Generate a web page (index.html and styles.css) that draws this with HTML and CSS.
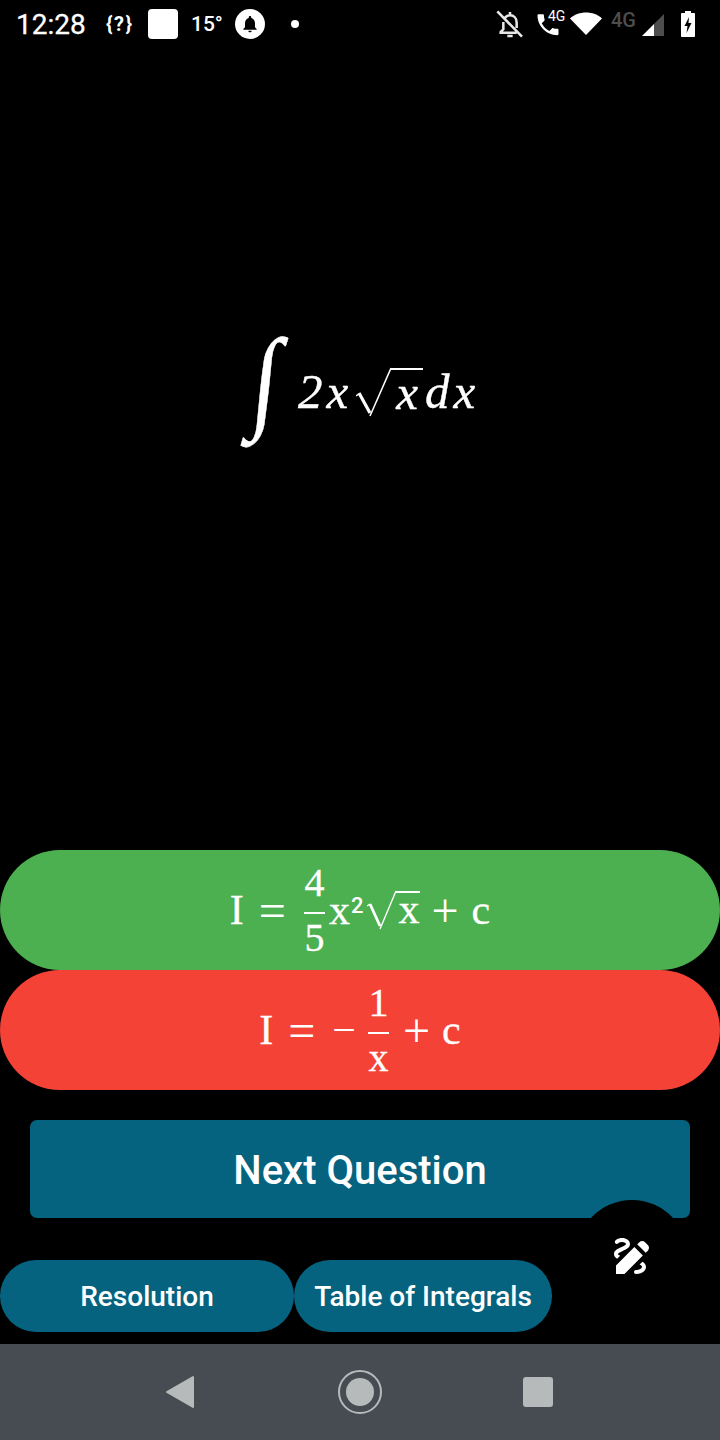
FILE: index.html
```html
<!DOCTYPE html>
<html lang="en">
<head>
    <meta charset="UTF-8">
    <meta name="viewport" content="width=device-width, initial-scale=1.0">
    <title>Integrals Quiz</title>
    <link rel="stylesheet" href="styles.css">
</head>
<body>
<div class="screen">

    <div class="status-bar">
        <span class="clock">12:28</span>
        <span class="unknown">{?}</span>
        <span class="white-square"></span>
        <span class="temp">15°</span>
        <span class="bell-badge">
            <svg width="20" height="20" viewBox="0 0 24 24"><path fill="#000" d="M12 22c1.100 0 2-.9 2-2h-4c0 1.100.9 2 2 2zm6-6v-5c0-3.100-1.600-5.600-4.500-6.300V4c0-.8-.7-1.500-1.500-1.500s-1.500.7-1.500 1.500v.7C7.600 5.400 6 7.900 6 11v5l-2 2v1h16v-1l-2-2z"/></svg>
        </span>
        <span class="dot"></span>

        <span class="status-right">
            <svg class="ic-bell-off" width="32" height="32" viewBox="0 0 24 24"><path fill="none" stroke="#e8e8e8" stroke-width="1.900" d="M7 10.500V16l-2 2v.5h12M8.300 7.200C9.100 6.200 10.400 5.500 12 5.500c2.900 0 5 2.300 5 5.500v4M10 21h4M12 5V3M2.500 2.500l18.500 19"/></svg>
            <span class="call">
                <svg width="28" height="28" viewBox="0 0 24 24"><path fill="#fff" d="M6.600 8.800c1.400 2.800 3.800 5.100 6.600 6.600l2.200-2.200c.3-.3.700-.4 1-.2 1.100.4 2.300.6 3.600.6.600 0 1 .4 1 1V18c0 .6-.4 1-1 1C10.600 19 3 11.400 3 2c0-.6.4-1 1-1h3.500c.6 0 1 .4 1 1 0 1.300.2 2.500.6 3.600.1.300 0 .7-.2 1L6.600 8.800z"/></svg>
                <span class="call-4g">4G</span>
            </span>
            <svg class="ic-wifi" width="32" height="24" viewBox="0 0 32 24"><path fill="#fff" d="M0 6.500C4 2.500 10 .5 16 .5s12 2 16 6L16 23z"/></svg>
            <span class="net-4g">4G</span>
            <svg class="ic-signal" width="22" height="22" viewBox="0 0 22 22"><path fill="#fff" d="M0 22 12 10v12z"/><path fill="#4d4d4d" d="M12 10 22 0v22H12z"/></svg>
            <svg class="ic-battery" width="14" height="26" viewBox="0 0 14 26"><path fill="#fff" d="M4 0h6v2h3c.6 0 1 .4 1 1v22c0 .6-.4 1-1 1H1c-.6 0-1-.4-1-1V3c0-.6.4-1 1-1h3z"/><path fill="#000" d="M8 6 3.500 15H6.500L5.500 22l5-10H7.500z"/></svg>
        </span>
    </div>

    <div class="question">
        <div class="math math-q">
            <span class="integral">∫</span>
            <span class="it two-x">2x</span>
            <span class="sqrt">
                <svg width="35" height="50" viewBox="0 0 35 50"><path fill="none" stroke="#fff" stroke-width="1.500" d="M0 29l3-2"/><path fill="none" stroke="#fff" stroke-width="3.200" d="M3 26l11 20"/><path fill="none" stroke="#fff" stroke-width="1.600" d="M14 49 35 1"/></svg>
                <span class="radicand it">x</span>
            </span>
            <span class="it dx">dx</span>
        </div>
    </div>

    <div class="answer green">
        <div class="math math-a">
            <span>I</span>
            <span class="eq">=</span>
            <span class="frac"><span class="num">4</span><span class="den">5</span></span>
            <span class="x-after">x</span><span class="sup">2</span>
            <span class="sqrt sqrt-small">
                <svg width="29" height="40" viewBox="0 0 29 40"><path fill="none" stroke="#fff" stroke-width="1.400" d="M0 16l3-2"/><path fill="none" stroke="#fff" stroke-width="2.800" d="M3 14l10 22"/><path fill="none" stroke="#fff" stroke-width="1.400" d="M13 39 29 1"/></svg>
                <span class="radicand">x</span>
            </span>
            <span class="op">+</span>
            <span class="c">c</span>
        </div>
    </div>

    <div class="answer red">
        <div class="math math-a">
            <span>I</span>
            <span class="eq">=</span>
            <span class="minus">−</span>
            <span class="frac"><span class="num">1</span><span class="den">x</span></span>
            <span class="op op-wide">+</span>
            <span class="c">c</span>
        </div>
    </div>

    <div class="next-wrap">
        <button class="next-btn" type="button">Next Question</button>
    </div>

    <div class="bottom-btns">
        <button class="pill pill-res" type="button">Resolution</button>
        <button class="pill pill-table" type="button">Table of Integrals</button>
    </div>

    <div class="fab">
        <svg width="48" height="48" viewBox="0 0 24 24"><path fill="#fff" d="M18.850 10.390l1.060-1.060c.78-.78.78-2.050 0-2.830L18.500 5.090c-.78-.78-2.050-.78-2.830 0l-1.060 1.060 4.240 4.240zm-5.660-2.830L4 16.760V21h4.240l9.190-9.190-4.240-4.250zM19 17.500c0 2.190-2.540 3.500-5 3.500-.55 0-1-.45-1-1s.45-1 1-1c1.540 0 3-.73 3-1.500 0-.47-.48-.87-1.230-1.200l1.480-1.480c1.070.63 1.750 1.470 1.750 2.680zM4.580 13.350C3.610 12.790 3 12.060 3 11c0-1.800 1.890-2.630 3.560-3.360C7.590 7.180 9 6.560 9 6c0-.41-.78-1-2-1-1.260 0-1.800.61-1.830.64-.35.41-.98.46-1.400.12-.41-.34-.49-.95-.15-1.380C3.730 4.240 4.760 3 7 3s4 1.320 4 3c0 1.870-1.930 2.720-3.640 3.470C6.420 9.880 5 10.500 5 11c0 .31.43.6 1.070.86l-1.490 1.490z"/></svg>
    </div>

    <div class="nav-bar">
        <svg width="30" height="34" viewBox="0 0 30 34"><path fill="#b6babb" stroke="#b6babb" stroke-width="2" stroke-linejoin="round" d="M2 17 28 2v30z"/></svg>
        <span class="nav-home"><span class="nav-home-in"></span></span>
        <span class="nav-square"></span>
    </div>

</div>
</body>
</html>
```

FILE: styles.css
```css
* {
    box-sizing: border-box;
}
body {
    margin: 0;
    background-color: #000;
    font-family: Roboto, sans-serif;
    color: #fff;
}
button {
    font-family: Roboto, sans-serif;
    font-weight: 500;
    color: #fff;
    border: none;
    padding: 0;
}
.screen {
    position: relative;
    width: 720px;
    height: 1440px;
    display: flex;
    flex-direction: column;
    overflow: hidden;
}

/* status bar */
.status-bar {
    height: 48px;
    display: flex;
    align-items: center;
    padding-left: 16px;
    flex-shrink: 0;
}
.clock {
    font-size: 28px;
    width: 90px;
    -webkit-text-stroke: 0.3px #fff;
}
.unknown {
    font-size: 20px;
    font-weight: 700;
    letter-spacing: 1.500px;
    width: 42px;
}
.white-square {
    width: 30px;
    height: 30px;
    background-color: #fff;
    border-radius: 4px;
    margin-right: 13px;
}
.temp {
    font-size: 21px;
    font-weight: 500;
    width: 44px;
}
.bell-badge {
    width: 30px;
    height: 30px;
    border-radius: 50%;
    background-color: #fff;
    display: flex;
    align-items: center;
    justify-content: center;
}
.dot {
    width: 8px;
    height: 8px;
    border-radius: 50%;
    background-color: #fff;
    margin-left: 26px;
}
.status-right {
    margin-left: auto;
    margin-right: 25px;
    display: flex;
    align-items: center;
}
.call {
    display: flex;
    align-items: flex-start;
    width: 40px;
    margin-left: 8px;
    padding-top: 5px;
}
.call-4g {
    font-size: 14px;
    margin-left: -14px;
    line-height: 16px;
    margin-top: -5px;
}
.ic-wifi {
    margin-left: -4px;
}
.net-4g {
    font-size: 20px;
    color: #4d4d4d;
    font-weight: 500;
    margin-left: 9px;
    margin-top: -8px;
    width: 30px;
}
.ic-signal {
    margin-left: 1px;
    margin-top: 1px;
}
.ic-battery {
    margin-left: 17px;
}

/* math */
.math {
    font-family: "Liberation Serif", serif;
    display: flex;
    align-items: center;
}
.it {
    font-style: italic;
}
.question {
    height: 802px;
    display: flex;
    justify-content: center;
    padding-top: 284px;
    flex-shrink: 0;
}
.math-q {
    font-size: 49px;
    height: 120px;
    -webkit-text-stroke: 0.4px #fff;
}
.two-x,
.dx {
    letter-spacing: 4px;
    margin-top: -2px;
}
.integral {
    font-size: 96px;
    width: 46px;
    text-align: center;
    margin-right: 11px;
    transform: translate(2px, -14px) skewX(-6deg) scaleY(1.175);
}
.sqrt {
    display: inline-flex;
    align-items: flex-start;
    margin-left: 4px;
}
.sqrt svg {
    display: block;
}
.radicand {
    border-top: 2px solid #fff;
    line-height: 45px;
    padding: 0 5px;
    margin-top: 1px;
}
.sqrt-small {
    margin-left: 4px;
}
.sqrt-small .radicand {
    line-height: 32px;
    padding: 0 1px 0 2px;
}
.dx {
    margin-left: 2px;
}

.answer {
    height: 120px;
    flex-shrink: 0;
    display: flex;
    justify-content: center;
    align-items: center;
    border-radius: 60px;
}
.green {
    background-color: #4caf50;
}
.red {
    background-color: #f44336;
}
.math-a {
    font-size: 42px;
    -webkit-text-stroke: 0.3px #fff;
}
.eq {
    font-size: 48px;
    margin: 0 18px 0 15px;
    -webkit-text-stroke: 0;
}
.op {
    font-size: 48px;
    margin: 0 13px 0 11px;
    -webkit-text-stroke: 0;
}
.op-wide {
    margin: 0 12px 0 14px;
}
.minus {
    margin-right: 12px;
    margin-left: -1px;
    -webkit-text-stroke: 0;
}
.x-after {
    margin-left: 4px;
}
.sup {
    font-family: Roboto, sans-serif;
    font-size: 22px;
    font-weight: 500;
    align-self: flex-start;
    margin-top: 33px;
    line-height: 24px;
    margin-left: 1px;
    -webkit-text-stroke: 0;
}
.frac {
    display: inline-flex;
    flex-direction: column;
    align-items: center;
    width: 21px;
    font-size: 40px;
}
.num {
    border-bottom: 2px solid #fff;
    width: 100%;
    text-align: center;
    line-height: 43px;
    padding-bottom: 8px;
}
.den {
    line-height: 44px;
    padding-top: 2px;
}

/* buttons */
.next-wrap {
    padding: 30px 30px 0;
    flex-shrink: 0;
}
.next-btn {
    width: 660px;
    height: 98px;
    display: block;
    background-color: #06637f;
    border-radius: 7px;
    font-size: 40px;
    padding-top: 2px;
}
.bottom-btns {
    display: flex;
    margin-top: 42px;
    flex-shrink: 0;
}
.pill {
    height: 72px;
    border-radius: 36px;
    background-color: #06637f;
    font-size: 28px;
}
.pill-res {
    width: 294px;
}
.pill-table {
    width: 258px;
}
.fab {
    position: absolute;
    left: 576px;
    top: 1200px;
    width: 112px;
    height: 112px;
    border-radius: 50%;
    background-color: #000;
    display: flex;
    align-items: center;
    justify-content: center;
}

/* nav */
.nav-bar {
    margin-top: 12px;
    height: 96px;
    flex-shrink: 0;
    background-color: #464c52;
    display: flex;
    align-items: center;
    padding-left: 165px;
}
.nav-home {
    width: 44px;
    height: 44px;
    border: 2px solid #b6babb;
    border-radius: 50%;
    margin-left: 143px;
    display: flex;
    align-items: center;
    justify-content: center;
}
.nav-home-in {
    width: 28px;
    height: 28px;
    border-radius: 50%;
    background-color: #b6babb;
}
.nav-square {
    width: 30px;
    height: 30px;
    border-radius: 3px;
    background-color: #b6babb;
    margin-left: 141px;
}
```
